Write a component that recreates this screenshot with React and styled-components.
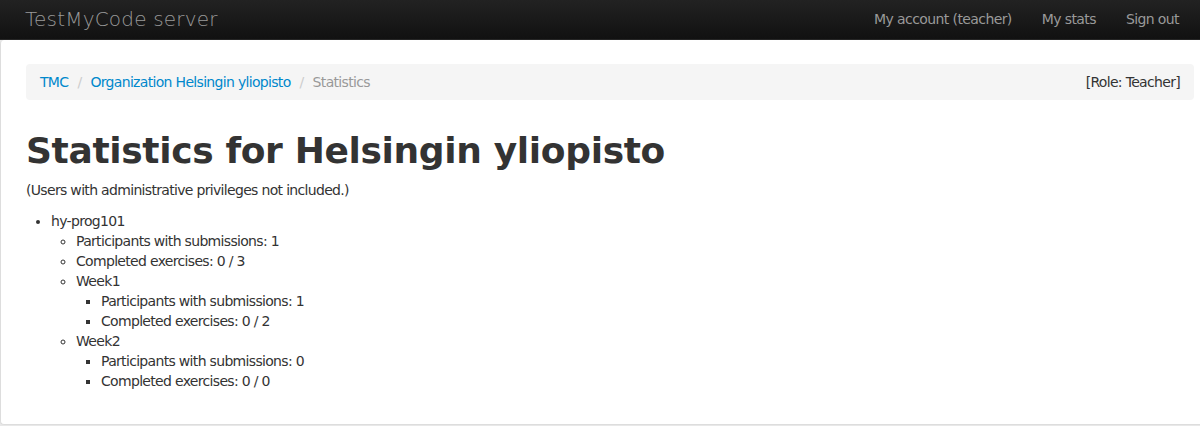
import React from "react";
import styled, { createGlobalStyle } from "styled-components";

const Global = createGlobalStyle`
  html, body { margin: 0; padding: 0; }
  body {
    background: #e8e8e8;
    font-family: "DejaVu Sans", Verdana, sans-serif;
    font-size: 14px;
    letter-spacing: -0.68px;
    line-height: 20px;
    color: #333;
  }
`;

const Navbar = styled.div`
  height: 40px;
  background-image: linear-gradient(to bottom, #222222, #111111);
  border-bottom: 1px solid #252525;
  box-sizing: border-box;
  display: flex;
  align-items: center;
  justify-content: space-between;
  padding: 0 6px 2px 25px;
`;

const Brand = styled.a`
  font-size: 20px;
  font-weight: 200;
  color: #999;
  text-decoration: none;
  line-height: 20px;
  letter-spacing: 0.2px;
`;

const Nav = styled.ul`
  list-style: none;
  margin: 0;
  padding: 0;
  display: flex;
`;

const NavLink = styled.a`
  display: block;
  padding: 10px 15px;
  color: #999;
  text-decoration: none;
  font-size: 14px;
  letter-spacing: -0.6px;
`;

const Panel = styled.div`
  background: #fff;
  border: 1px solid #ddd;
  border-right: none;
  border-top: none;
  border-radius: 4px 0 0 4px;
  padding: 24px 6px 23px 25px;
`;

const Breadcrumb = styled.ul`
  list-style: none;
  margin: 0 0 31px;
  padding: 8px 14px;
  background: #f5f5f5;
  border-radius: 4px;
  display: flex;
  align-items: center;
`;

const Crumb = styled.li`
  display: flex;
  color: ${(p) => (p.$active ? "#999" : "#333")};
`;

const CrumbLink = styled.a`
  color: #0088cc;
  text-decoration: none;
`;

const Divider = styled.span`
  color: #ccc;
  padding: 0 9px;
`;

const Role = styled.li`
  margin-left: auto;
`;

const Title = styled.h1`
  font-size: 36px;
  letter-spacing: -0.35px;
  line-height: 40px;
  font-weight: bold;
  margin: 0 0 9px;
  color: #333;
`;

const Para = styled.p`
  margin: 0 0 11px;
`;

const List = styled.ul`
  margin: ${(p) => (p.$nested ? "0" : "0 0 10px")};
  padding: 0 0 0 25px;
  list-style-type: ${(p) => p.$type || "disc"};
`;

const data = [
  {
    name: "hy-prog101",
    stats: ["Participants with submissions: 1", "Completed exercises: 0 / 3"],
    weeks: [
      { name: "Week1", stats: ["Participants with submissions: 1", "Completed exercises: 0 / 2"] },
      { name: "Week2", stats: ["Participants with submissions: 0", "Completed exercises: 0 / 0"] },
    ],
  },
];

export default function App() {
  return (
    <>
      <Global />
      <Navbar>
        <Brand href="#">TestMyCode server</Brand>
        <Nav>
          <li><NavLink href="#">My account (teacher)</NavLink></li>
          <li><NavLink href="#">My stats</NavLink></li>
          <li><NavLink href="#">Sign out</NavLink></li>
        </Nav>
      </Navbar>
      <Panel>
        <Breadcrumb>
          <Crumb><CrumbLink href="#">TMC</CrumbLink><Divider>/</Divider></Crumb>
          <Crumb><CrumbLink href="#">Organization Helsingin yliopisto</CrumbLink><Divider>/</Divider></Crumb>
          <Crumb $active>Statistics</Crumb>
          <Role>[Role: Teacher]</Role>
        </Breadcrumb>
        <Title>Statistics for Helsingin yliopisto</Title>
        <Para>(Users with administrative privileges not included.)</Para>
        <List>
          {data.map((c) => (
            <li key={c.name}>
              {c.name}
              <List $nested $type="circle">
                {c.stats.map((s) => <li key={s}>{s}</li>)}
                {c.weeks.map((w) => (
                  <li key={w.name}>
                    {w.name}
                    <List $nested $type="square">
                      {w.stats.map((s) => <li key={s}>{s}</li>)}
                    </List>
                  </li>
                ))}
              </List>
            </li>
          ))}
        </List>
      </Panel>
    </>
  );
}
